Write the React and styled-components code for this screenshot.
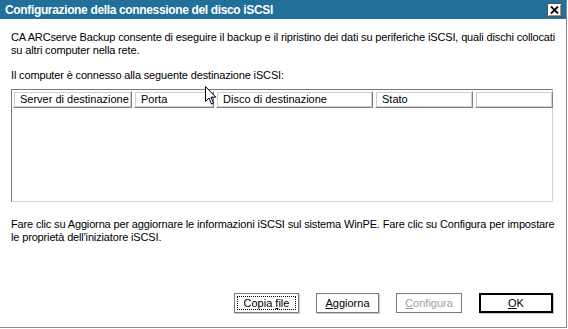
import styled, { createGlobalStyle } from "styled-components";

const Global = createGlobalStyle`
  html, body { margin: 0; padding: 0; background: #fff; }
  body { font-family: "Liberation Sans", Arial, sans-serif; }
`;

const Dialog = styled.div`
  position: relative;
  width: 566px;
  height: 327px;
  border-right: 1px solid #8a8a8a;
  border-bottom: 1px solid #8a8a8a;
  background: #fff;
  display: flex;
  flex-direction: column;
  font-family: "Liberation Sans", Arial, sans-serif;
  font-size: 11px;
  color: #000;
  overflow: hidden;
`;

const TitleBar = styled.div`
  height: 19px;
  background: #22709a;
  display: flex;
  align-items: center;
  justify-content: space-between;
  padding: 0 4px 0 5px;
  flex-shrink: 0;
`;

const Title = styled.div`
  color: #fff;
  font-weight: bold;
  font-size: 12px;
  letter-spacing: -0.35px;
`;

const CloseBtn = styled.div`
  width: 13px;
  height: 12px;
  background: #fff;
  border: 1px solid #555;
  box-shadow: inset 1px 1px 0 #fff, inset -1px -1px 0 #999;
  display: flex;
  align-items: center;
  justify-content: center;
`;

const Body = styled.div`
  flex: 1;
  display: flex;
  flex-direction: column;
  padding: 12px 12px 0 11px;
`;

const Para = styled.p`
  margin: 0;
  line-height: 13px;
  white-space: nowrap;
  letter-spacing: -0.15px;
  margin-top: ${(p) => p.$top || 0}px;
`;

const List = styled.div`
  margin-top: 7px;
  width: 542px;
  height: 113px;
  border: 1px solid #7a7a7a;
  border-right-color: #d4d4d4;
  border-bottom-color: #d4d4d4;
  box-sizing: border-box;
  padding: 1px;
`;

const HeaderRow = styled.div`
  display: flex;
  gap: 2px;
  height: 17px;
`;

const HeaderCell = styled.div`
  width: ${(p) => p.$w}px;
  flex-shrink: 0;
  box-sizing: border-box;
  height: 17px;
  border: 1px solid #fff;
  border-right-color: #808080;
  border-bottom-color: #808080;
  outline: 1px solid #cfcfcf;
  outline-offset: -2px;
  padding: 1px 0 0 6px;
  line-height: 13px;
  white-space: nowrap;
`;

const ButtonRow = styled.div`
  margin-top: auto;
  display: flex;
  justify-content: flex-end;
  gap: 17px;
  padding: 0 1px 14px 0;
`;

const Button = styled.div`
  width: ${(p) => p.$w || 66}px;
  height: 20px;
  box-sizing: border-box;
  display: flex;
  align-items: center;
  justify-content: center;
  background: #fff;
  color: ${(p) => (p.$disabled ? "#a0a0a0" : "#000")};
  border: ${(p) => (p.$default ? "2px solid #000" : "1px solid #7a7a7a")};
  box-shadow: ${(p) => (p.$disabled ? "none" : "1px 1px 0 #c8c8c8")};
  position: relative;
  u { text-decoration: underline; }
`;

const Focus = styled.span`
  position: absolute;
  inset: 2px;
  border: 1px dotted #000;
`;

const Cursor = styled.svg`
  position: absolute;
  left: 205px;
  top: 86px;
`;

export default function App() {
  return (
    <>
      <Global />
      <Dialog>
        <TitleBar>
          <Title>Configurazione della connessione del disco iSCSI</Title>
          <CloseBtn>
            <svg width="9" height="8" viewBox="0 0 9 8">
              <path d="M1 0.5 L8 7.5 M8 0.5 L1 7.5" stroke="#000" strokeWidth="1.8" />
            </svg>
          </CloseBtn>
        </TitleBar>
        <Body>
          <Para>
            CA ARCserve Backup consente di eseguire il backup e il ripristino dei dati su periferiche iSCSI, quali dischi collocati
          </Para>
          <Para>su altri computer nella rete.</Para>
          <Para $top={12}>Il computer è connesso alla seguente destinazione iSCSI:</Para>
          <List>
            <HeaderRow>
              <HeaderCell $w={119}>Server di destinazione</HeaderCell>
              <HeaderCell $w={80}>Porta</HeaderCell>
              <HeaderCell $w={157}>Disco di destinazione</HeaderCell>
              <HeaderCell $w={98}>Stato</HeaderCell>
              <HeaderCell $w={78} />
            </HeaderRow>
          </List>
          <Para $top={16}>
            Fare clic su Aggiorna per aggiornare le informazioni iSCSI sul sistema WinPE. Fare clic su Configura per impostare
          </Para>
          <Para>le proprietà dell'iniziatore iSCSI.</Para>
          <ButtonRow>
            <Button $w={65}>
              <Focus />
              <span>
                Copia <u>f</u>ile
              </span>
            </Button>
            <Button $w={63}>
              <span>
                <u>A</u>ggiorna
              </span>
            </Button>
            <Button $w={66} $disabled>
              <span>
                <u>C</u>onfigura
              </span>
            </Button>
            <Button $w={74} $default>
              <span>
                <u>O</u>K
              </span>
            </Button>
          </ButtonRow>
        </Body>
        <Cursor width="12" height="19" viewBox="0 0 12 19">
          <path
            d="M0.5 0.5 L0.5 15.5 L4 12 L6.5 18 L8.5 17 L6 11.2 L10.8 11.2 Z"
            fill="#fff"
            stroke="#000"
            strokeWidth="1"
          />
        </Cursor>
      </Dialog>
    </>
  );
}
